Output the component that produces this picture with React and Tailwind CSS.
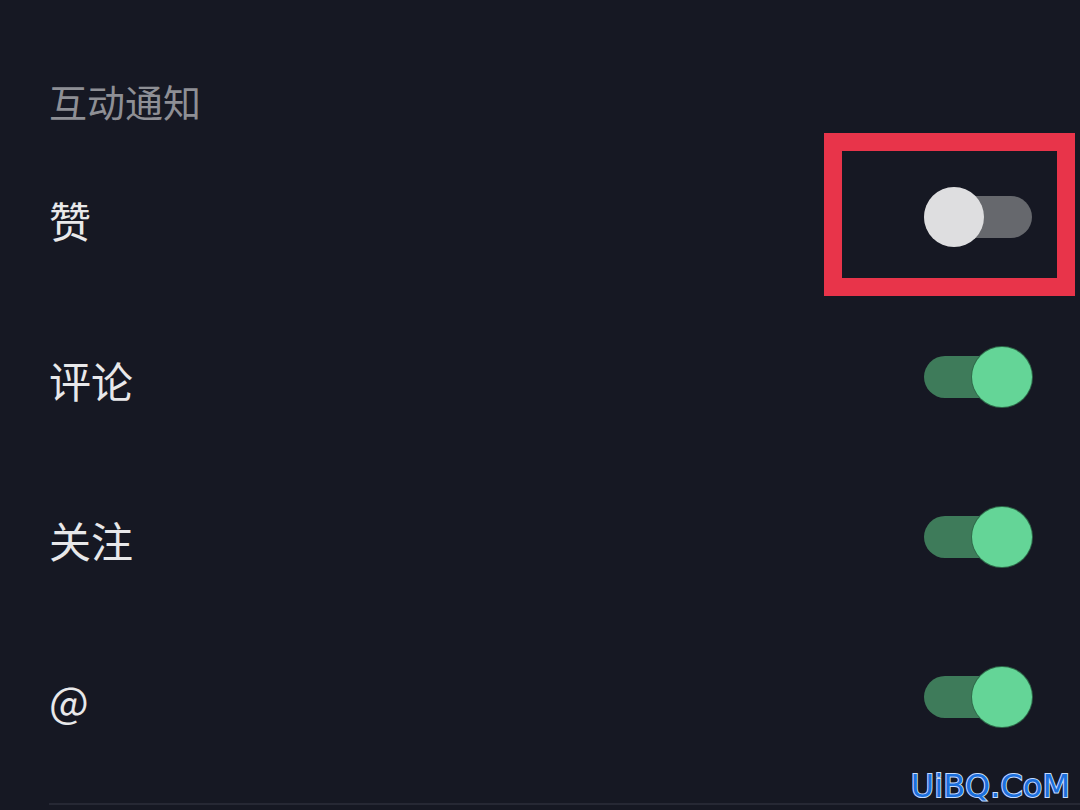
import React from "react";

const rows = [
	{ label: "赞", on: false, marked: true },
	{ label: "评论", on: true },
	{ label: "关注", on: true },
	{ label: "@", on: true },
];

const Toggle = ({ on, marked }) => (
	<div className="relative w-[108px] h-[61px]">
		{marked && (
			<div className="absolute -left-[100px] -right-[43px] -top-[54px] -bottom-[48px] border-[18px] border-[#e8344a]" />
		)}
		<div
			className={
				on
					? "absolute left-0 right-0 top-[9px] h-[42px] rounded-full bg-[#3e7b5a]"
					: "absolute left-0 right-0 top-[9px] h-[42px] rounded-full bg-[#66686d]"
			}
		/>
		<div
			className={
				on
					? "absolute left-[48px] top-0 w-[60px] h-[60px] rounded-full bg-[#64d597] ring-1 ring-[#2f6b4a]"
					: "absolute left-0 top-0 w-[60px] h-[60px] rounded-full bg-[#dedee0]"
			}
		/>
	</div>
);

const App = () => {
	return (
		<div
			lang="zh-CN"
			className="relative w-[1080px] h-[810px] overflow-hidden bg-[#161823] flex flex-col"
			style={{ fontFamily: '"Noto Sans CJK SC", "Noto Sans", sans-serif' }}
		>
			<div className="h-[137px] pl-[49px] pt-[77px]">
				<h3 className="text-[38px] leading-[48px] text-[#8e8f95]">互动通知</h3>
			</div>

			{rows.map((row) => (
				<div
					key={row.label}
					className="h-[160px] flex items-center justify-between pl-[49px] pr-[48px]"
				>
					<span className="text-[42px] leading-[50px] text-[#e8e8ea] pt-[6px]">
						{row.label}
					</span>
					<Toggle on={row.on} marked={row.marked} />
				</div>
			))}

			<div className="mt-[26px] ml-[49px] h-[2px] bg-[#262834]" />

			<div
				className="absolute right-[10px] bottom-[8px] text-[32px] leading-[32px] text-[#1c6fdc] [-webkit-text-stroke:2px_#c4dcff] [paint-order:stroke_fill]"
				style={{ fontFamily: '"DejaVu Sans", sans-serif' }}
			>
				UiBQ.CoM
			</div>
		</div>
	);
};

export default App;
